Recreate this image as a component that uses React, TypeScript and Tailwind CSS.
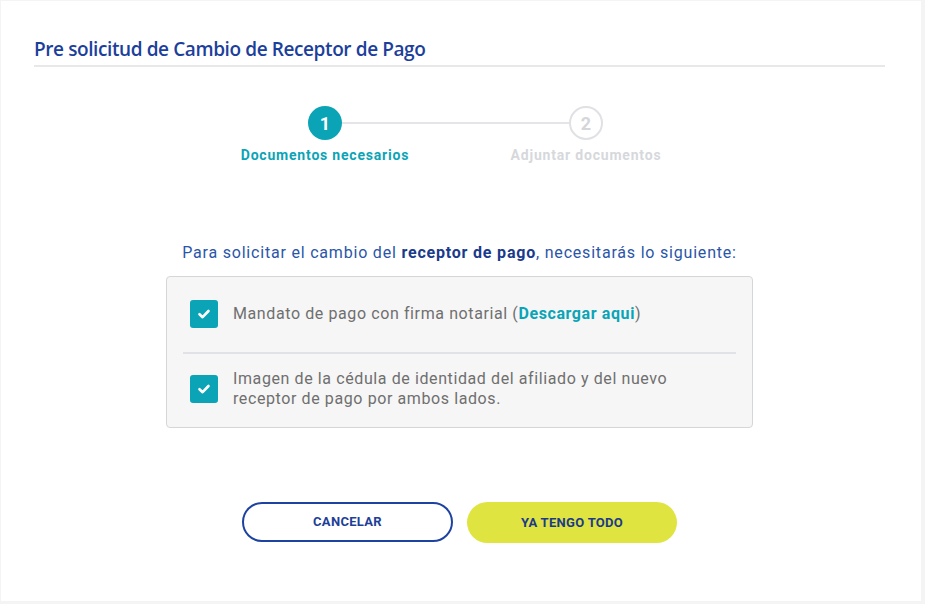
import React from "react";

const TEAL = "bg-[#0aa4b6]";

function CheckBox() {
  return (
    <div className={`flex h-[28px] w-[28px] shrink-0 items-center justify-center rounded-[3px] ${TEAL}`}>
      <svg width="14" height="14" viewBox="0 0 14 14" fill="none">
        <path d="M2.5 7.2 L5.6 10.2 L11.5 4" stroke="#fff" strokeWidth="2.6" strokeLinecap="round" strokeLinejoin="round" />
      </svg>
    </div>
  );
}

function Stepper() {
  return (
    <div className="mt-[39px]">
      {/* circles + connector */}
      <div className="ml-[274px] flex w-[295px] items-center">
        <div className={`flex h-[34px] w-[34px] items-center justify-center rounded-full ${TEAL} text-[18px] font-bold text-white`}>
          1
        </div>
        <div className="h-[2px] flex-1 bg-[#e3e5e8]" />
        <div className="flex h-[34px] w-[34px] items-center justify-center rounded-full border-2 border-[#dfe1e4] text-[18px] font-bold text-[#d4d6da]">
          2
        </div>
      </div>
      {/* labels */}
      <div className="ml-[191px] mt-[7px] flex gap-[61px] text-[14px] font-bold leading-[16px] tracking-[0.8px]">
        <div className="w-[200px] text-center text-[#0aa4b6]">Documentos necesarios</div>
        <div className="w-[200px] text-center text-[#d6d8dc]">Adjuntar documentos</div>
      </div>
    </div>
  );
}

export default function App() {
  return (
    <div
      className="h-[604px] w-[925px] bg-[#f4f4f4] pl-px pt-px"
      style={{ fontFamily: "Roboto, 'Liberation Sans', sans-serif" }}
    >
      <div className="h-[600px] w-[920px] bg-white pl-[33px] pr-[36px] pt-[36px]">
        <h1
          className="text-[19px] font-semibold leading-[24px] tracking-[-0.4px] text-[#1c3f9c]"
          style={{ fontFamily: "'Open Sans', 'Noto Sans', sans-serif" }}
        >
          Pre solicitud de Cambio de Receptor de Pago
        </h1>
        <div className="mt-[4px] h-[2px] bg-[#e6e8ea]" />

        <Stepper />

        <p className="mt-[80px] text-center text-[16px] leading-[20px] tracking-[0.8px] text-[#2a55a8]">
          Para solicitar el cambio del <span className="font-bold text-[#1a3a8c]">receptor de pago</span>, necesitarás lo
          siguiente:
        </p>

        <div className="mx-auto mt-[13px] w-[587px] rounded-[4px] border border-[#d4d6d9] bg-[#f6f6f6] px-[16px] pb-[18px]">
          <div className="flex items-center gap-[15px] pl-[7px] pt-[23px] pb-[24px]">
            <CheckBox />
            <span className="text-[16px] leading-[20px] tracking-[0.6px] text-[#6f6f6f]">
              Mandato de pago con firma notarial (
              <span className="font-bold text-[#0aa4b6]">Descargar aqui</span>)
            </span>
          </div>
          <div className="h-[2px] bg-[#e0e2e5]" />
          <div className="flex items-center gap-[15px] pl-[7px] pt-[15px]">
            <CheckBox />
            <span className="w-[470px] text-[16px] leading-[20px] tracking-[0.6px] text-[#6f6f6f]">
              Imagen de la cédula de identidad del afiliado y del nuevo receptor de pago por ambos lados.
            </span>
          </div>
        </div>

        <div className="mt-[74px] flex justify-center gap-[14px]">
          <button className="h-[40px] w-[211px] rounded-full border-2 border-[#1e42a0] text-[13px] font-bold tracking-[0.3px] text-[#1e3f98]">
            CANCELAR
          </button>
          <button className="h-[41px] w-[210px] rounded-full bg-[#dfe440] text-[13px] font-bold tracking-[0.3px] text-[#1b3a8a]">
            YA TENGO TODO
          </button>
        </div>
      </div>
    </div>
  );
}
